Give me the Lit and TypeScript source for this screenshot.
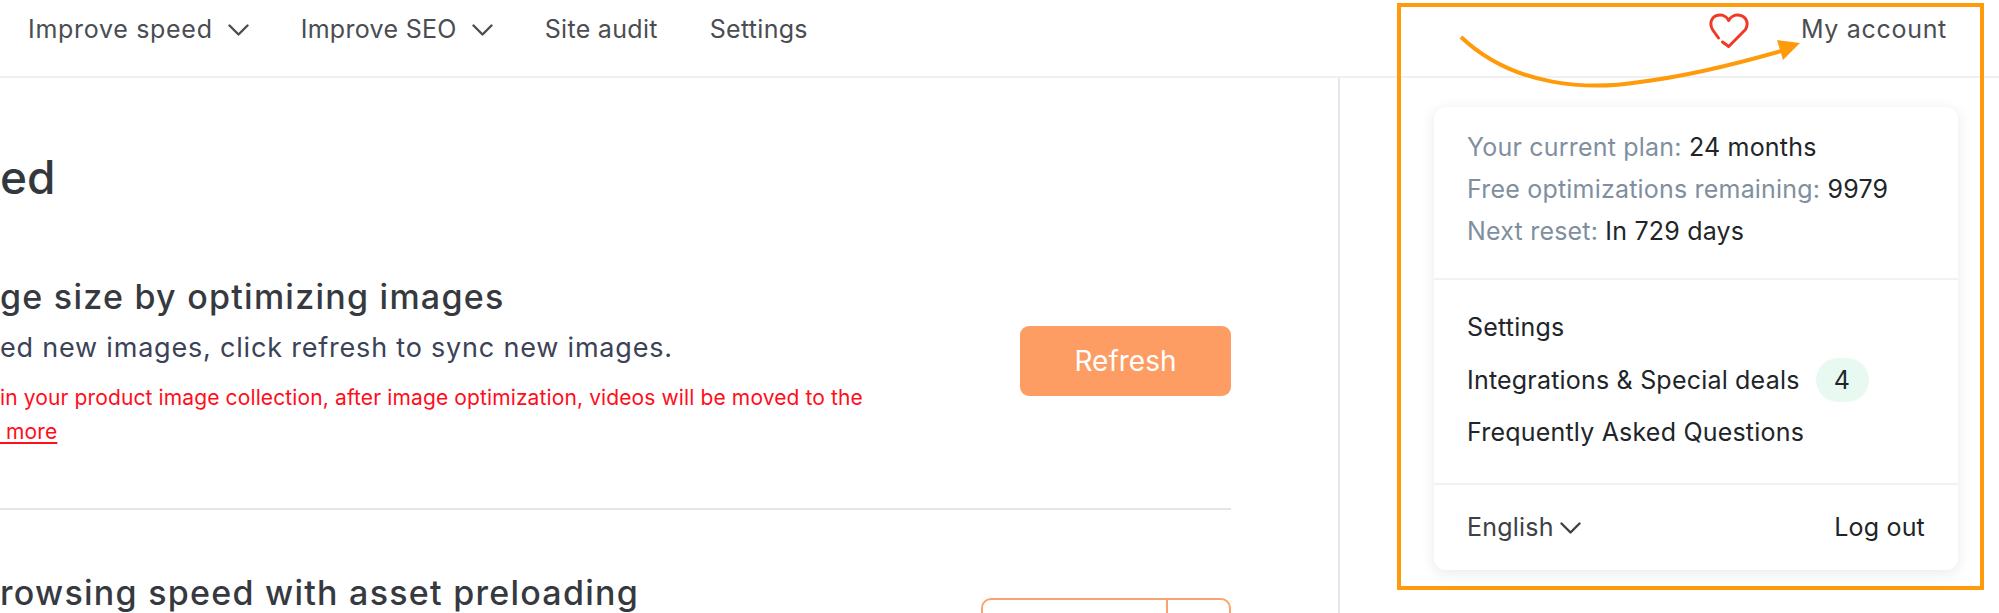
import { css, html, LitElement, svg } from "lit";
import { customElement } from "lit/decorators.js";

const chevron = svg`<path d="M1.5 1.5 L10.5 10.5 L19.5 1.5" fill="none" stroke="currentColor" stroke-width="2.4" stroke-linecap="round" stroke-linejoin="round"/>`;

@customElement("app-root")
export class AppRoot extends LitElement {
  static override styles = css`
    :host {
      display: block;
      position: relative;
      width: 1999px;
      height: 613px;
      overflow: hidden;
      background: #fff;
      font-family: "Inter", "Liberation Sans", sans-serif;
      color: #212529;
    }

    header {
      display: flex;
      align-items: center;
      gap: 52px;
      height: 76px;
      box-sizing: content-box;
      padding: 0 52px 0 28px;
      border-bottom: 2px solid #f0f0f1;
      font-size: 25px;
      letter-spacing: 0.3px;
      color: #4a4d52;
    }

    .nav-item {
      display: flex;
      align-items: center;
      gap: 15px;
      margin-bottom: 18px;
      white-space: nowrap;
    }

    .nav-item.wide {
      letter-spacing: 0.7px;
    }

    .chevron {
      width: 21px;
      height: 12px;
      margin-top: 2px;
    }

    .heart {
      margin-left: auto;
      width: 40px;
      height: 36px;
      margin-bottom: 15px;
    }

    .content {
      display: flex;
      height: 535px;
    }

    main {
      width: 1231px;
      padding: 69px 107px 0 0;
      flex: none;
    }

    h1 {
      margin: 0 0 66px;
      font-size: 46px;
      line-height: 60px;
      font-weight: 500;
      color: #33383f;
    }

    .row {
      display: flex;
      align-items: center;
      justify-content: space-between;
    }

    .row.first {
      padding-bottom: 59px;
      border-bottom: 2px solid #e3e5e8;
    }

    .row.second {
      padding-top: 59px;
    }

    .row.second .text {
      min-height: 128px;
    }

    h2 {
      margin: 0 0 7px;
      font-size: 34px;
      line-height: 48px;
      letter-spacing: 1.25px;
      font-weight: 500;
      color: #363a40;
    }

    .sub {
      margin: 0 0 13px;
      font-size: 27px;
      line-height: 40px;
      letter-spacing: 0.8px;
      color: #3c4257;
    }

    .warn {
      margin: 0;
      font-size: 21px;
      line-height: 34px;
      letter-spacing: 0.12px;
      color: #ff0d1a;
      white-space: pre;
    }

    .warn u {
      text-underline-offset: 3px;
    }

    .refresh {
      width: 211px;
      height: 70px;
      display: flex;
      align-items: center;
      justify-content: center;
      border-radius: 9px;
      background: #fd9d63;
      color: #fff;
      font-size: 28px;
    }

    .split {
      display: flex;
      width: 250px;
      height: 70px;
      box-sizing: border-box;
      border: 2px solid #fda26f;
      border-radius: 10px;
    }

    .split span:first-child {
      width: 183px;
      border-right: 2px solid #fda26f;
    }

    aside {
      flex: 1;
      padding: 29px 0 0 94px;
      border-left: 2px solid #e3e8ee;
    }

    .card {
      width: 524px;
      height: 463px;
      box-sizing: border-box;
      border-radius: 12px;
      background: #fff;
      box-shadow: 0 3px 14px rgba(30, 40, 60, 0.1);
      font-size: 25px;
      letter-spacing: 0.2px;
      display: flex;
      flex-direction: column;
    }

    .section {
      padding: 0 33px;
      border-bottom: 2px solid #f1f2f4;
    }

    .plan {
      padding-top: 19px;
      padding-bottom: 26px;
      line-height: 42px;
      color: #7f8fa0;
    }

    .plan b {
      font-weight: 400;
      color: #212529;
    }

    .links {
      padding-top: 21px;
      padding-bottom: 24px;
      line-height: 52.5px;
    }

    .links div {
      display: flex;
      align-items: center;
      gap: 16px;
      height: 52.5px;
    }

    .badge {
      display: flex;
      align-items: center;
      justify-content: center;
      width: 53px;
      height: 44px;
      border-radius: 22px;
      background: #e8f9f1;
    }

    .foot {
      flex: 1;
      display: flex;
      align-items: center;
      justify-content: space-between;
      padding: 0 33px;
    }

    .lang {
      display: flex;
      align-items: center;
      gap: 6px;
      color: #3d4046;
    }

    /* annotation drawn over the screenshot */
    .callout {
      position: absolute;
      left: 1397px;
      top: 3px;
      width: 587px;
      height: 587px;
      box-sizing: border-box;
      border: 4px solid #ff9a0a;
      pointer-events: none;
    }

    .arrow {
      position: absolute;
      left: 0;
      top: 0;
      pointer-events: none;
    }
  `;

  override render() {
    return html`
      <header>
        <div class="nav-item wide">
          Improve speed
          <svg class="chevron" viewBox="0 0 21 12">${chevron}</svg>
        </div>
        <div class="nav-item">
          Improve SEO
          <svg class="chevron" viewBox="0 0 21 12">${chevron}</svg>
        </div>
        <div class="nav-item">Site audit</div>
        <div class="nav-item">Settings</div>
        <svg class="heart" viewBox="0 0 40 36">
          <path
            d="M9.5 25 L3.8 17 C0 11 2 3.5 9 2.2 C14 1.4 18 4 19.7 7.5 C21.4 4 25.5 1.4 30.5 2.2 C38 3.5 39.8 11 36.5 16.5 L19.7 33.5 L13.5 29"
            fill="none"
            stroke="#f03a25"
            stroke-width="3"
            stroke-linecap="round"
            stroke-linejoin="round"
          />
        </svg>
        <div class="nav-item wide">My account</div>
      </header>
      <div class="content">
        <main>
          <h1>ed</h1>
          <div class="row first">
            <div class="text">
              <h2>ge size by optimizing images</h2>
              <p class="sub">ed new images, click refresh to sync new images.</p>
              <p class="warn">in your product image collection, after image optimization, videos will be moved to the</p>
              <p class="warn"><u> more</u></p>
            </div>
            <div class="refresh">Refresh</div>
          </div>
          <div class="row second">
            <div class="text">
              <h2>rowsing speed with asset preloading</h2>
            </div>
            <div class="split"><span></span><span></span></div>
          </div>
        </main>
        <aside>
          <div class="card">
            <div class="section plan">
              Your current plan: <b>24 months</b><br />
              Free optimizations remaining: <b>9979</b><br />
              Next reset: <b>In 729 days</b>
            </div>
            <div class="section links">
              <div>Settings</div>
              <div>Integrations &amp; Special deals <span class="badge">4</span></div>
              <div>Frequently Asked Questions</div>
            </div>
            <div class="foot">
              <span class="lang">
                English
                <svg class="chevron" viewBox="0 0 21 12">${chevron}</svg>
              </span>
              <span>Log out</span>
            </div>
          </div>
        </aside>
      </div>
      <div class="callout"></div>
      <svg class="arrow" width="1999" height="613" viewBox="0 0 1999 613">
        <path d="M1461 37 C1515 88 1590 90 1640 82 C1690 76 1740 63 1785 50" fill="none" stroke="#ff9a0a" stroke-width="4" />
        <path d="M1800 43 L1777 40 L1783 60 Z" fill="#ff9a0a" />
      </svg>
    `;
  }
}

declare global {
  interface HTMLElementTagNameMap {
    "app-root": AppRoot;
  }
}
